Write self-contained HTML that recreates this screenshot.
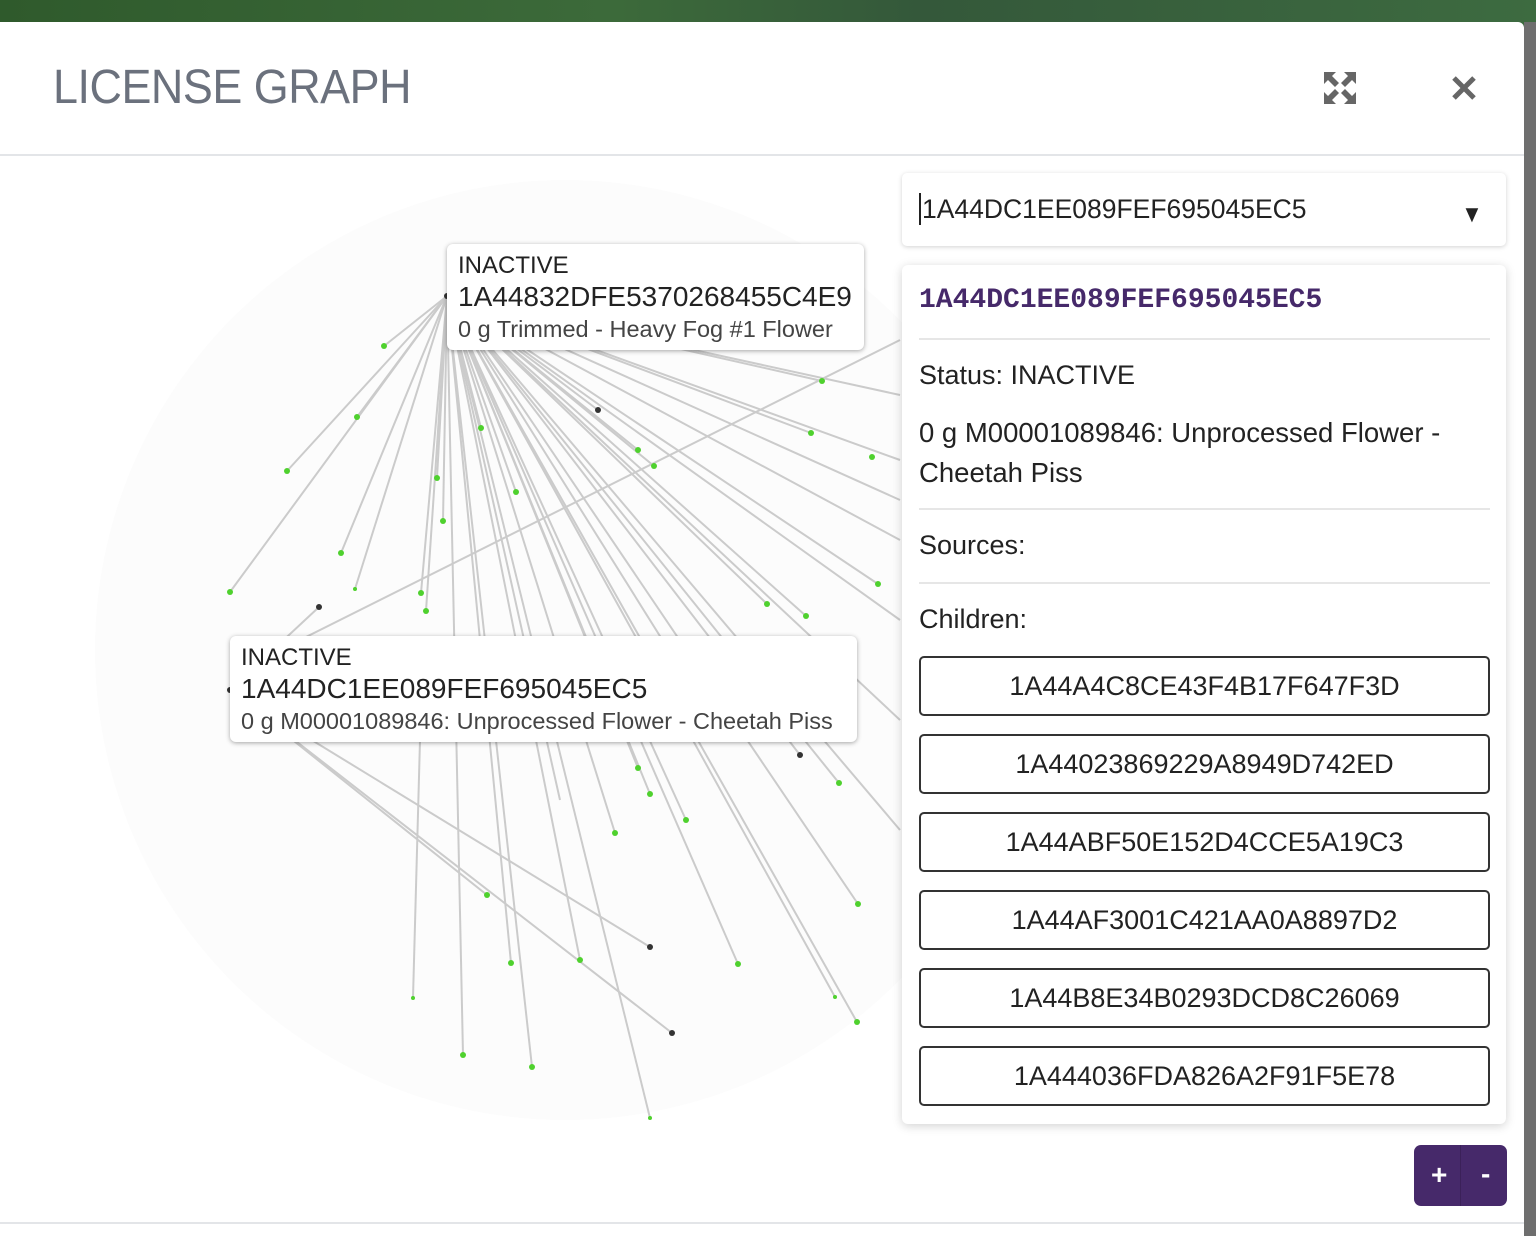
<!DOCTYPE html>
<html><head><meta charset="utf-8"><style>
body{margin:0;width:1536px;height:1236px;overflow:hidden;background:#3a6a3c;font-family:"Liberation Sans",sans-serif;position:relative}
.bg{position:absolute;left:0;top:0;width:1536px;height:22px;background:linear-gradient(90deg,#2f5a2c,#3c6a3a 40%,#34583a 60%,#3d6b40)}
.rstrip{position:absolute;left:1524px;top:22px;width:12px;height:1214px;background:#6e6e6e}
.modal{position:absolute;left:0;top:22px;width:1524px;height:1214px;background:#fff;border-top-right-radius:6px}
.hdr{position:absolute;left:0;top:0;width:1524px;height:132px;border-bottom:2px solid #e3e5e8}
.title{position:absolute;left:53px;top:38px;font-size:48px;color:#6b717d;letter-spacing:-0.5px;transform:scaleX(0.935);transform-origin:left}
svg.g{position:absolute;left:0;top:0}
.lbl{position:absolute;background:#fff;border-radius:6px;box-shadow:0 1px 5px rgba(0,0,0,.35);padding:6px 12px;color:#222;white-space:nowrap}
.lbl .a{font-size:24px;line-height:30px}.lbl .b{font-size:28px;line-height:32px}.lbl .c{font-size:23.5px;line-height:32px;color:#444}
.dd{position:absolute;left:902px;width:604px;height:73px;background:#fff;border-radius:5px;box-shadow:0 1px 5px rgba(0,0,0,.18)}
.panel{position:absolute;left:902px;width:604px;height:859px;background:#fff;border-radius:6px;box-shadow:0 2px 10px rgba(0,0,0,.18)}
.panel .in{position:absolute;left:17px;width:571px}
.t{font-size:27px;color:#222}
hr.s{position:absolute;left:17px;width:571px;margin:0;border:0;border-top:2px solid #e6e6e6}
.btn{position:absolute;left:17px;width:567px;height:56px;border:2px solid #333;border-radius:5px;text-align:center;line-height:56px;font-size:27px;color:#222}
.zm{position:absolute;left:1414px;width:93px;height:61px;background:#46296a;border-radius:7px;color:#fff;font-size:28px;font-weight:bold}
.foot{position:absolute;left:0;width:1524px;border-top:2px solid #e3e5e8}
</style></head><body>
<div class="bg"></div><div class="rstrip"></div>
<div class="modal">
<div class="hdr"><div class="title">LICENSE GRAPH</div>
<svg style="position:absolute;left:1322px;top:48px" width="36" height="36" viewBox="0 0 36 36" fill="#666"><path d="M2 2h12l-4 4 7 7-4 4-7-7-4 4zM34 2v12l-4-4-7 7-4-4 7-7-4-4zM2 34V22l4 4 7-7 4 4-7 7 4 4zM34 34H22l4-4-7-7 4-4 7 7 4-4z"/></svg>
<svg style="position:absolute;left:1451px;top:53px" width="26" height="26" viewBox="0 0 26 26"><path d="M3 3L23 23M23 3L3 23" stroke="#666" stroke-width="5"/></svg>
</div>
</div>
<svg class="g" width="1536" height="1236">
<circle cx="565" cy="650" r="470" fill="#fcfcfc"/>
<g stroke="#cbcbcb" stroke-width="2">
<line x1="447" y1="296" x2="384" y2="346"/><line x1="447" y1="296" x2="357" y2="417"/><line x1="447" y1="296" x2="287" y2="471"/><line x1="447" y1="296" x2="230" y2="592"/><line x1="447" y1="296" x2="341" y2="553"/><line x1="447" y1="296" x2="355" y2="589"/><line x1="447" y1="296" x2="426" y2="611"/><line x1="447" y1="296" x2="421" y2="593"/><line x1="447" y1="296" x2="437" y2="478"/><line x1="447" y1="296" x2="443" y2="521"/><line x1="447" y1="296" x2="481" y2="428"/><line x1="447" y1="296" x2="516" y2="492"/><line x1="447" y1="296" x2="654" y2="466"/><line x1="447" y1="296" x2="638" y2="450"/><line x1="447" y1="296" x2="811" y2="433"/><line x1="447" y1="296" x2="822" y2="381"/><line x1="447" y1="296" x2="900" y2="460"/><line x1="447" y1="296" x2="900" y2="540"/><line x1="447" y1="296" x2="878" y2="584"/><line x1="447" y1="296" x2="806" y2="616"/><line x1="447" y1="296" x2="767" y2="604"/><line x1="447" y1="296" x2="638" y2="768"/><line x1="447" y1="296" x2="650" y2="794"/><line x1="447" y1="296" x2="615" y2="833"/><line x1="447" y1="296" x2="686" y2="820"/><line x1="447" y1="296" x2="839" y2="783"/><line x1="447" y1="296" x2="858" y2="904"/><line x1="447" y1="296" x2="738" y2="964"/><line x1="447" y1="296" x2="835" y2="997"/><line x1="447" y1="296" x2="857" y2="1022"/><line x1="447" y1="296" x2="580" y2="960"/><line x1="447" y1="296" x2="511" y2="963"/><line x1="447" y1="296" x2="463" y2="1055"/><line x1="447" y1="296" x2="532" y2="1067"/><line x1="447" y1="296" x2="650" y2="1118"/><line x1="447" y1="296" x2="598" y2="410"/><line x1="447" y1="296" x2="800" y2="755"/><line x1="447" y1="296" x2="900" y2="720"/><line x1="447" y1="296" x2="900" y2="830"/><line x1="447" y1="296" x2="900" y2="395"/><line x1="447" y1="296" x2="900" y2="500"/><line x1="447" y1="296" x2="900" y2="620"/><line x1="447" y1="296" x2="560" y2="800"/><line x1="447" y1="296" x2="700" y2="700"/>
<line x1="230" y1="690" x2="487" y2="895"/><line x1="230" y1="690" x2="650" y2="947"/><line x1="230" y1="690" x2="672" y2="1033"/><line x1="420" y1="740" x2="413" y2="998"/><line x1="230" y1="690" x2="319" y2="607"/><line x1="300" y1="640" x2="900" y2="340"/>
</g>
<g fill="#4fd12e">
<circle cx="384" cy="346" r="3"/><circle cx="357" cy="417" r="3"/><circle cx="287" cy="471" r="3"/><circle cx="230" cy="592" r="3"/><circle cx="341" cy="553" r="3"/><circle cx="355" cy="589" r="2"/><circle cx="426" cy="611" r="3"/><circle cx="421" cy="593" r="3"/><circle cx="437" cy="478" r="3"/><circle cx="443" cy="521" r="3"/><circle cx="481" cy="428" r="3"/><circle cx="516" cy="492" r="3"/><circle cx="654" cy="466" r="3"/><circle cx="638" cy="450" r="3"/><circle cx="811" cy="433" r="3"/><circle cx="822" cy="381" r="3"/><circle cx="872" cy="457" r="3"/><circle cx="878" cy="584" r="3"/><circle cx="806" cy="616" r="3"/><circle cx="767" cy="604" r="3"/><circle cx="638" cy="768" r="3"/><circle cx="650" cy="794" r="3"/><circle cx="615" cy="833" r="3"/><circle cx="686" cy="820" r="3"/><circle cx="839" cy="783" r="3"/><circle cx="858" cy="904" r="3"/><circle cx="738" cy="964" r="3"/><circle cx="835" cy="997" r="2"/><circle cx="857" cy="1022" r="3"/><circle cx="580" cy="960" r="3"/><circle cx="511" cy="963" r="3"/><circle cx="487" cy="895" r="3"/><circle cx="463" cy="1055" r="3"/><circle cx="532" cy="1067" r="3"/><circle cx="413" cy="998" r="2"/><circle cx="650" cy="1118" r="2"/>
</g>
<g fill="#333"><circle cx="598" cy="410" r="3"/><circle cx="319" cy="607" r="3"/><circle cx="650" cy="947" r="3"/><circle cx="672" cy="1033" r="3"/><circle cx="800" cy="755" r="3"/><circle cx="447" cy="296" r="3"/><circle cx="230" cy="690" r="3"/></g>
</svg>
<div class="lbl" style="left:447px;top:244px;width:395px;height:94px;padding:7px 11px 5px"><div class="a">INACTIVE</div><div class="b">1A44832DFE5370268455C4E9</div><div class="c">0 g Trimmed - Heavy Fog #1 Flower</div></div>
<div class="lbl" style="left:230px;top:636px;width:605px;height:94px;padding:7px 11px 5px"><div class="a">INACTIVE</div><div class="b">1A44DC1EE089FEF695045EC5</div><div class="c">0 g M00001089846: Unprocessed Flower - Cheetah Piss</div></div>
<div class="dd" style="top:173px"><div style="position:absolute;left:17px;top:20px;font-size:26.5px;color:#222;border-left:2px solid #222;padding-left:1px;line-height:32px">1A44DC1EE089FEF695045EC5</div><div style="position:absolute;left:558px;top:28px;font-size:24px;color:#222;transform:scaleX(0.9)">▼</div></div>
<div class="panel" style="top:265px">
<div class="in" style="top:20px;font-family:'Liberation Mono',monospace;font-weight:bold;font-size:28px;color:#46296a">1A44DC1EE089FEF695045EC5</div>
<hr class="s" style="top:73px">
<div class="in t" style="top:95px">Status: INACTIVE</div>
<div class="in t" style="top:148px;line-height:40px;font-size:27.5px">0 g M00001089846: Unprocessed Flower -<br>Cheetah Piss</div>
<hr class="s" style="top:243px">
<div class="in t" style="top:265px">Sources:</div>
<hr class="s" style="top:317px">
<div class="in t" style="top:339px">Children:</div>
<div class="btn" style="top:391px">1A44A4C8CE43F4B17F647F3D</div>
<div class="btn" style="top:469px">1A44023869229A8949D742ED</div>
<div class="btn" style="top:547px">1A44ABF50E152D4CCE5A19C3</div>
<div class="btn" style="top:625px">1A44AF3001C421AA0A8897D2</div>
<div class="btn" style="top:703px">1A44B8E34B0293DCD8C26069</div>
<div class="btn" style="top:781px">1A444036FDA826A2F91F5E78</div>
</div>
<div class="zm" style="top:1145px"><span style="position:absolute;left:17px;top:14px">+</span><span style="position:absolute;left:46px;top:0;width:1px;height:61px;background:#3b2159"></span><span style="position:absolute;left:67px;top:13px">-</span></div>
<div class="foot" style="top:1222px"></div>
</body></html>
